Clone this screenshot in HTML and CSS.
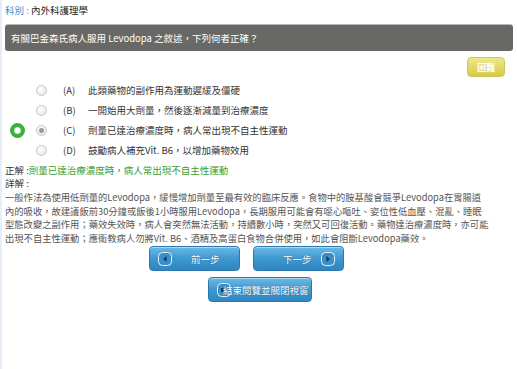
FILE: index.html
```html
<!DOCTYPE html>
<html lang="zh-Hant">
<head>
    <meta charset="UTF-8">
    <title>內外科護理學</title>
    <link rel="stylesheet" href="styles.css">
</head>
<body>
    <div class="subject"><span class="subject-label">科別 :</span> 內外科護理學</div>

    <div class="question">有關巴金森氏病人服用 Levodopa 之敘述，下列何者正確？</div>

    <div class="level-row">
        <span class="level">困難</span>
    </div>

    <div class="options">
        <div class="option">
            <span class="mark"></span>
            <span class="radio"></span>
            <span class="opt-key">(A)</span>
            <span class="opt-text">此類藥物的副作用為運動遲緩及僵硬</span>
        </div>
        <div class="option">
            <span class="mark"></span>
            <span class="radio"></span>
            <span class="opt-key">(B)</span>
            <span class="opt-text">一開始用大劑量，然後逐漸減量到治療濃度</span>
        </div>
        <div class="option">
            <span class="mark"><span class="ring"></span></span>
            <span class="radio checked"></span>
            <span class="opt-key">(C)</span>
            <span class="opt-text">劑量已達治療濃度時，病人常出現不自主性運動</span>
        </div>
        <div class="option">
            <span class="mark"></span>
            <span class="radio"></span>
            <span class="opt-key">(D)</span>
            <span class="opt-text">鼓勵病人補充Vit. B6，以增加藥物效用</span>
        </div>
    </div>

    <div class="answer">正解 :<span class="answer-text">劑量已達治療濃度時，病人常出現不自主性運動</span></div>
    <div class="detail-title">詳解 :</div>
    <p class="detail">一般作法為使用低劑量的Levodopa，緩慢增加劑量至最有效的臨床反應。食物中的胺基酸會競爭Levodopa在胃腸道<br>內的吸收，故建議飯前30分鐘或飯後1小時服用Levodopa，長期服用可能會有噁心嘔吐、姿位性低血壓、混亂、睡眠<br>型態改變之副作用；藥效失效時，病人會突然無法活動，持續數小時，突然又可回復活動。藥物達治療濃度時，亦可能<br>出現不自主性運動；應衛教病人勿將Vit. B6、酒精及高蛋白食物合併使用，如此會阻斷Levodopa藥效。</p>

    <div class="nav">
        <a class="btn btn-prev" href="#">
            <svg class="btn-icon" width="14" height="14" viewBox="0 0 14 14"><rect x="0.5" y="0.5" width="13" height="13" rx="4" fill="#3c8fc6" stroke="#e8f3fb"/><path d="M8.5 4 L5 7 L8.5 10 Z" fill="#123a5c"/></svg>
            <span>前一步</span>
        </a>
        <a class="btn btn-next" href="#">
            <span>下一步</span>
            <svg class="btn-icon" width="14" height="14" viewBox="0 0 14 14"><rect x="0.5" y="0.5" width="13" height="13" rx="4" fill="#3c8fc6" stroke="#e8f3fb"/><path d="M5.5 4 L9 7 L5.5 10 Z" fill="#123a5c"/></svg>
        </a>
    </div>
    <div class="close-row">
        <a class="btn btn-close" href="#">
            <svg class="btn-icon close-icon" width="14" height="14" viewBox="0 0 14 14"><rect x="0.5" y="0.5" width="13" height="13" rx="4" fill="#3c8fc6" stroke="#e8f3fb"/><rect x="4" y="5" width="4" height="4" fill="#123a5c"/></svg>
            <span>結束閱覽並關閉視窗</span>
        </a>
    </div>
</body>
</html>
```

FILE: styles.css
```css
body {
    margin: 0;
    padding: 0 4px 0 3px;
    border-left: 2px solid #e6eef8;
    min-height: 369px;
    box-sizing: border-box;
    font-family: "Noto Sans CJK TC", "Noto Sans", sans-serif;
    font-size: 9.5px;
    color: #333;
    background: #fff;
}
.subject {
    padding-top: 3px;
    height: 14px;
    line-height: 14px;
    color: #222;
}
.subject-label {
    color: #3a8fd2;
}
.question {
    margin-top: 7px;
    height: 26px;
    line-height: 26px;
    padding-left: 6px;
    background: #686966;
    border-top: 1px solid #b9b9b6;
    border-radius: 3px;
    color: #fff;
}
.level-row {
    display: flex;
    justify-content: flex-end;
    margin-top: 6px;
    padding-right: 8px;
}
.level {
    width: 38px;
    height: 20px;
    line-height: 20px;
    text-align: center;
    border-radius: 4px;
    border: 1px solid #cfc65a;
    box-sizing: border-box;
    background: linear-gradient(#eee78c, #d6cb45);
    color: #fff;
    font-size: 9px;
    font-weight: bold;
}
.options {
    margin-top: 3px;
}
.option {
    display: flex;
    align-items: center;
    height: 20px;
}
.mark {
    width: 31px;
    display: flex;
    align-items: center;
}
.ring {
    margin-left: 5px;
    width: 15px;
    height: 15px;
    box-sizing: border-box;
    border-radius: 50%;
    border: 4px solid #3db03a;
    box-shadow: inset 0 0 1px #1d7a1d;
}
.radio {
    width: 11px;
    height: 11px;
    box-sizing: border-box;
    border-radius: 50%;
    border: 1px solid #c8c8c8;
    background: radial-gradient(circle at 40% 35%, #fff, #e2e2e2);
    position: relative;
}
.radio.checked::after {
    content: "";
    position: absolute;
    left: 2px;
    top: 2px;
    width: 5px;
    height: 5px;
    border-radius: 50%;
    background: #9a9a9a;
}
.opt-key {
    margin-left: 16px;
    width: 25px;
}
.answer {
    margin-top: 4px;
    line-height: 13px;
    color: #333;
}
.answer-text {
    color: #3a9d2c;
}
.detail-title {
    line-height: 13px;
}
.detail {
    margin: 0;
    padding-top: 1px;
    font-size: 9.3px;
    line-height: 13.5px;
    color: #555;
    white-space: nowrap;
}
.nav {
    display: flex;
    gap: 13px;
    margin-top: 1px;
    padding-left: 144px;
}
.close-row {
    display: flex;
    margin-top: 6px;
    padding-left: 203px;
}
.btn {
    display: flex;
    align-items: center;
    box-sizing: border-box;
    height: 25px;
    border-radius: 4px;
    border: 1px solid #2a78ae;
    background: linear-gradient(#6bb9e6, #3f98d0 50%, #2f86c0);
    box-shadow: inset 0 1px 0 #a9d9f3;
    color: #fff;
    text-decoration: none;
    white-space: nowrap;
    text-shadow: 0 0 1px #1b4f78;
}
.btn-prev {
    width: 91px;
    padding-left: 8px;
}
.btn-prev span {
    margin-left: 19px;
}
.btn-next {
    width: 91px;
    padding-left: 29px;
}
.btn-next span {
    margin-right: 9px;
}
.btn-close {
    width: 104px;
    padding-left: 8px;
}
.close-icon {
    margin-right: -8px;
}
```
